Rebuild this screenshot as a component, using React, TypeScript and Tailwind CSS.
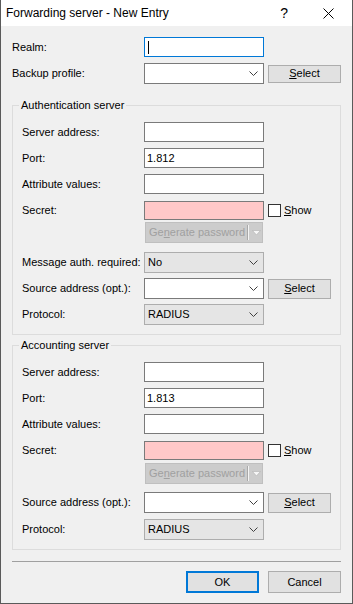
import type { ReactNode } from 'react';

const font = { fontFamily: '"Liberation Sans", Arial, sans-serif' };

function Chevron() {
  return (
    <svg width="9" height="6" viewBox="0 0 9 6" className="shrink-0">
      <polyline points="0.5,0.5 4.5,4.5 8.5,0.5" fill="none" stroke="#404040" strokeWidth="1" />
    </svg>
  );
}

function TextBox({ value, focused, pink }: { value?: string; focused?: boolean; pink?: boolean }) {
  return (
    <div
      className={
        'w-[120px] flex items-center pl-[2px] text-[11px] text-black ' +
        (focused
          ? 'h-[20px] border border-[#0078d7] bg-white'
          : pink
            ? 'h-[19px] border border-[#7a7a7a] bg-[#ffc8c8]'
            : 'h-[20px] border border-[#7a7a7a] bg-white')
      }
    >
      {focused ? <span className="w-px h-[13px] bg-black ml-[1px]" /> : value}
    </div>
  );
}

function Combo({ value, list }: { value?: string; list?: boolean }) {
  return (
    <div
      className={
        'w-[120px] h-[21px] flex items-center justify-between pl-[3px] pr-[5px] text-[11px] text-black border ' +
        (list ? 'bg-[#e5e5e5] border-[#adadad]' : 'bg-white border-[#7a7a7a]')
      }
    >
      <span>{value}</span>
      <Chevron />
    </div>
  );
}

function Btn({ w, children, def }: { w: string; children: ReactNode; def?: boolean }) {
  return (
    <div
      className={
        w +
        ' flex items-center justify-center text-[11px] text-black bg-[#e1e1e1] ' +
        (def ? 'border-2 border-[#0078d7]' : 'border border-[#adadad]')
      }
    >
      {children}
    </div>
  );
}

function Row({ label, lw, mt, children }: { label: string; lw: string; mt: string; children: ReactNode }) {
  return (
    <div className={'flex items-center ' + mt}>
      <div className={lw + ' text-[11px] text-black shrink-0'}>{label}</div>
      {children}
    </div>
  );
}

function GenPassword() {
  return (
    <div className="ml-px w-[118px] h-[21px] flex items-center bg-[#cccccc] border border-[#bfbfbf] text-[11px] text-[#a0a0a0]">
      <span className="pl-[3px] w-[102px]">
        Ge<span className="underline">n</span>erate password
      </span>
      <span className="w-px h-[15px] bg-[#a8a8a8]" />
      <span className="w-px h-[15px] bg-[#f4f4f4]" />
      <svg width="10" height="6" viewBox="0 0 10 6" className="ml-[3px]">
        <polygon points="0.5,0.5 8.5,0.5 4.5,5" fill="#f6f6f6" stroke="#b0b0b0" strokeWidth="0.6" />
      </svg>
    </div>
  );
}

function ShowBox() {
  return (
    <div className="flex items-center ml-[4px]">
      <span className="w-[13px] h-[13px] border border-[#333] bg-white" />
      <span className="ml-[3px] text-[11px] text-black">
        <span className="underline">S</span>how
      </span>
    </div>
  );
}

function ServerGroup({
  title,
  port,
  mt,
  gapGen,
  gapSrc,
  gapProto,
  gapMsg,
}: {
  title: string;
  port: string;
  mt: string;
  gapGen: string;
  gapSrc: string;
  gapProto: string;
  gapMsg?: boolean;
}) {
  const lw = 'w-[122px]';
  return (
    <div className={'relative border border-[#dcdcdc] pl-[9px] pt-[16px] pb-[9px] ' + mt}>
      <div className="absolute -top-[8px] left-[6px] bg-[#f0f0f0] px-[2px] text-[11px] text-black leading-[14px]">{title}</div>
      <Row label="Server address:" lw={lw} mt="">
        <TextBox />
      </Row>
      <Row label="Port:" lw={lw} mt="mt-[6px]">
        <TextBox value={port} />
      </Row>
      <Row label="Attribute values:" lw={lw} mt="mt-[6px]">
        <TextBox />
      </Row>
      <Row label="Secret:" lw={lw} mt="mt-[7px]">
        <TextBox pink />
        <ShowBox />
      </Row>
      <div className={'flex ' + gapGen}>
        <div className={lw} />
        <GenPassword />
      </div>
      {gapMsg && (
        <Row label="Message auth. required:" lw={lw} mt="mt-[9px]">
          <Combo value="No" list />
        </Row>
      )}
      <Row label="Source address (opt.):" lw={lw} mt={gapSrc}>
        <Combo />
        <div className="ml-[4px]">
          <Btn w="w-[63px] h-[20px]">
            <span className="underline">S</span>elect
          </Btn>
        </div>
      </Row>
      <Row label="Protocol:" lw={lw} mt={gapProto}>
        <Combo value="RADIUS" list />
      </Row>
    </div>
  );
}

export default function App() {
  return (
    <div style={font} className="w-[353px] h-[604px] bg-[#f0f0f0] border-l border-r border-b border-[#5a5a5a] flex flex-col">
      <div className="h-[26px] bg-white flex items-center justify-between shrink-0">
        <span className="pl-[5px] text-[12px] text-black">Forwarding server - New Entry</span>
        <div className="flex items-center">
          <span className="text-[14px] text-black mr-[35px]">?</span>
          <svg width="11" height="11" viewBox="0 0 11 11" className="mr-[18px]">
            <path d="M0.5 0.5 L10.5 10.5 M10.5 0.5 L0.5 10.5" stroke="#000" strokeWidth="1" />
          </svg>
        </div>
      </div>
      <div className="pl-[11px] pr-[11px] flex flex-col">
        <Row label="Realm:" lw="w-[132px]" mt="mt-[11px]">
          <TextBox focused />
        </Row>
        <Row label="Backup profile:" lw="w-[132px]" mt="mt-[6px]">
          <Combo />
          <div className="ml-[4px]">
            <Btn w="w-[73px] h-[18px]">
              <span className="underline">S</span>elect
            </Btn>
          </div>
        </Row>
        <ServerGroup
          title="Authentication server"
          port="1.812"
          mt="mt-[21px]"
          gapGen="mt-[2px]"
          gapSrc="mt-[5px]"
          gapProto="mt-[5px]"
          gapMsg
        />
        <ServerGroup
          title="Accounting server"
          port="1.813"
          mt="mt-[10px]"
          gapGen="mt-[3px]"
          gapSrc="mt-[8px]"
          gapProto="mt-[6px]"
        />
        <div className="h-px bg-[#a0a0a0] mt-[11px]" />
        <div className="flex justify-end mt-[9px] gap-[9px]">
          <Btn w="w-[73px] h-[22px]" def>
            OK
          </Btn>
          <Btn w="w-[73px] h-[22px]">Cancel</Btn>
        </div>
      </div>
    </div>
  );
}
